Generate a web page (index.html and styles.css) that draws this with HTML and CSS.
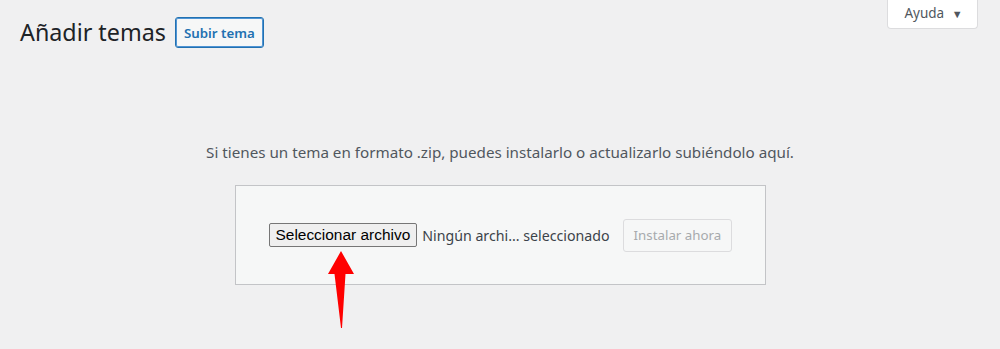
FILE: index.html
```html
<!DOCTYPE html>
<html lang="es">
   <head>
      <meta charset="UTF-8">
      <meta name="viewport" content="width=device-width, initial-scale=1.0"/>
      <title>Añadir temas</title>
      <link rel="stylesheet" href="styles.css">
   </head>
   <body>
      <div id="screen-meta-links">
         <button class="help-tab">Ayuda <span class="caret">&#9660;</span></button>
      </div>

      <div class="wrap">
         <div class="page-head">
            <h1>Añadir temas</h1>
            <button class="page-title-action">Subir tema</button>
         </div>

         <div class="upload-theme">
            <p class="install-help">Si tienes un tema en formato .zip, puedes instalarlo o actualizarlo subiéndolo aquí.</p>
            <div class="form-holder">
               <form class="wp-upload-form">
                  <span class="file-pick">
                     <button type="button" class="file-button">Seleccionar archivo</button>
                     <span class="file-name">Ningún archi... seleccionado</span>
                  </span>
                  <button type="button" class="button-install" disabled>Instalar ahora</button>
               </form>
               <svg class="arrow" width="30" height="80" viewBox="0 0 30 80">
                  <polygon points="14,0 27,23 18.5,23 15,77 14,77 7.5,23 1,23" fill="#ff0000"/>
               </svg>
            </div>
         </div>
      </div>
   </body>
</html>
```
FILE: styles.css
```css
*
{
   box-sizing: border-box;
}

html,
body
{
   min-height: 100%;
}

body
{
   margin: 0;
   padding-bottom: 65px;
   background: #f0f0f1;
   color: #3c434a;
   font-family: "Noto Sans", "Open Sans", sans-serif;
   font-size: 13px;
}

#screen-meta-links
{
   float: right;
   margin-right: 22px;
}

.help-tab
{
   width: 91px;
   height: 29px;
   border: 1px solid #dcdcde;
   border-top: none;
   border-radius: 0 0 4px 4px;
   background: #fff;
   color: #50575e;
   font-family: inherit;
   font-size: 13.5px;
   padding: 0 0 2px 2px;
}

.help-tab .caret
{
   font-size: 11px;
   margin-left: 4px;
   color: #50575e;
}

.wrap
{
   padding: 0 20px;
}

.page-head
{
   display: flex;
   align-items: center;
   gap: 9px;
   padding-top: 17px;
}

h1
{
   margin: 0;
   font-size: 23.3px;
   font-weight: 400;
   color: #1d2327;
   line-height: 31px;
}

.page-title-action
{
   height: 31px;
   padding: 0 8px;
   border: 1px solid #2271b1;
   border-radius: 3px;
   background: #f6f7f7;
   color: #2271b1;
   font-family: inherit;
   font-size: 13.3px;
   font-weight: 600;
   box-shadow: 0 0 0 1px #4f94d4 inset;
}

.upload-theme
{
   text-align: center;
}

.install-help
{
   margin: 93px 0 0;
   font-size: 15.2px;
   color: #50575e;
   line-height: 22px;
}

.form-holder
{
   position: relative;
   width: 531px;
   margin: 22px auto 0;
}

.wp-upload-form
{
   height: 100px;
   margin: 0;
   background: #f6f7f7;
   border: 1px solid #c3c4c7;
   display: flex;
   align-items: center;
   padding: 0 0 0 33px;
   gap: 13px;
}

.file-pick
{
   display: flex;
   align-items: center;
   gap: 5px;
}

.file-button
{
   height: 24px;
   padding: 0 6px;
   background: #efefef;
   border: 1px solid #767676;
   border-radius: 2px;
   color: #000;
   font-family: "Liberation Sans", Arial, sans-serif;
   font-size: 15.45px;
}

.file-name
{
   font-size: 14.2px;
   color: #3c434a;
   white-space: nowrap;
}

.button-install
{
   height: 33px;
   padding: 0 10px;
   background: #f6f7f7;
   border: 1px solid #dcdcde;
   border-radius: 3px;
   color: #a7aaad;
   font-family: inherit;
   font-size: 13.3px;
}

.arrow
{
   position: absolute;
   left: 92px;
   top: 66px;
}
```
